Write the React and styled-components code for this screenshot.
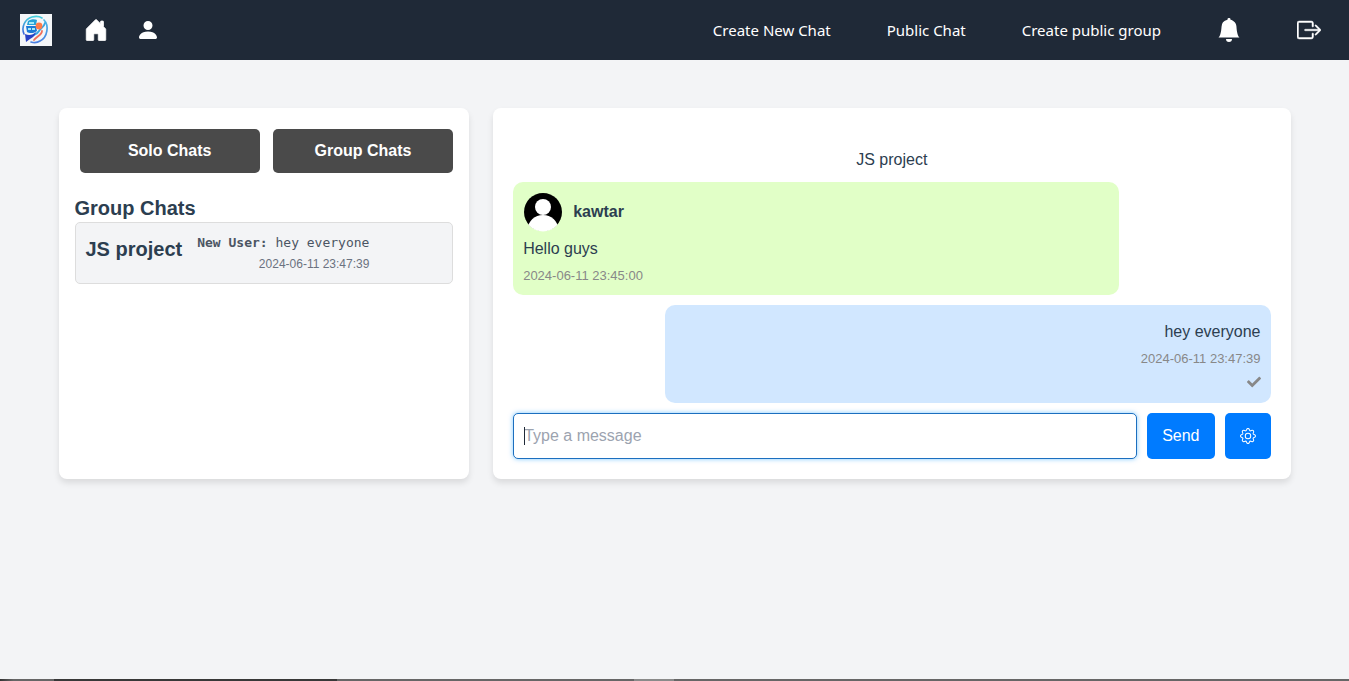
import React from "react";
import styled, { createGlobalStyle } from "styled-components";
import { BsHouseDoorFill, BsFillPersonFill, BsBellFill, BsBoxArrowRight, BsGear } from "react-icons/bs";
import { FaCheck } from "react-icons/fa";

const GlobalStyle = createGlobalStyle`
  *, *::before, *::after { box-sizing: border-box; }
  body {
    margin: 0;
    background: #f3f4f6;
    color: #2c3e50;
    font: 16px/24px "Liberation Sans", Arial, sans-serif;
  }
  h1, h2, h3, p, ul { margin: 0; padding: 0; }
  button, input { font: inherit; }
`;

const Page = styled.div`
  display: flex;
  flex-direction: column;
  min-height: 100vh;
`;

const NavBar = styled.header`
  display: flex;
  align-items: center;
  justify-content: space-between;
  height: 60px;
  padding: 0 28px 0 20px;
  background: #1f2937;
`;

const NavGroup = styled.nav`
  display: flex;
  align-items: center;
  gap: ${(p) => p.$gap}px;
`;

const NavLink = styled.a`
  display: flex;
  color: #fff;
  font: 15px/24px "Noto Sans", "Open Sans", sans-serif;
  text-decoration: none;
  white-space: nowrap;
`;

const IconButton = styled.button`
  display: flex;
  padding: 0;
  border: 0;
  background: none;
  color: #fff;
  cursor: pointer;
`;

const Main = styled.main`
  display: flex;
  gap: 24px;
  width: 100%;
  max-width: 1280px;
  margin: 0 auto;
  padding: 48px 24px;
`;

const Card = styled.section`
  background: #fff;
  border-radius: 8px;
  box-shadow: 0 4px 6px rgba(0, 0, 0, 0.1);
`;

const Sidebar = styled(Card)`
  flex: none;
  width: calc(100% / 3);
  padding: 16px;
`;

const Conversation = styled(Card)`
  flex: 1;
  min-width: 0;
  padding: 20px;
`;

const Tabs = styled.div`
  display: flex;
  gap: 13px;
  padding: 5px 0 5px 5px;
  margin-bottom: 16px;
`;

const TabButton = styled.button`
  flex: 1;
  height: 44px;
  border: 0;
  border-radius: 5px;
  background: #4a4a4a;
  color: #fff;
  font-weight: bold;
  cursor: pointer;
`;

const SectionTitle = styled.h2`
  font-size: 20px;
  line-height: 28px;
`;

const ChatList = styled.ul`
  list-style: none;
`;

const ChatItem = styled.li`
  display: flex;
  gap: 15px;
  padding: 10px;
  border: 1px solid #ddd;
  border-radius: 5px;
  background: #f3f4f6;
`;

const ChatName = styled.h3`
  font-size: 20px;
  line-height: 32px;
`;

const Preview = styled.div`
  display: flex;
  flex-direction: column;
  gap: 2px;
  text-align: right;
`;

const PreviewText = styled.p`
  color: #4b5563;
  font: 13px/20px "DejaVu Sans Mono", monospace;
`;

const PreviewTime = styled.time`
  color: #6b7280;
  font-size: 12px;
  line-height: 18px;
`;

const ChatTitle = styled.h1`
  padding: 20px 0 10px;
  font-size: 16px;
  font-weight: normal;
  text-align: center;
`;

const Messages = styled.div`
  display: flex;
  flex-direction: column;
  gap: 10px;
  margin-bottom: 10px;
`;

const Bubble = styled.article`
  display: flex;
  flex-direction: column;
  align-items: ${(p) => (p.$own ? "flex-end" : "flex-start")};
  align-self: ${(p) => (p.$own ? "flex-end" : "flex-start")};
  width: 80%;
  padding: 10px;
  border-radius: 10px;
  background: ${(p) => (p.$own ? "#d1e7ff" : "#e1ffc7")};
`;

const Sender = styled.div`
  display: flex;
  align-items: center;
  gap: 10px;
  height: 40px;
  font-weight: bold;
`;

const MessageText = styled.p`
  margin: 5px 0;
`;

const MessageTime = styled.time`
  color: #888;
  font-size: 13px;
  line-height: 19px;
`;

const Status = styled.span`
  display: flex;
  align-items: center;
  height: 25px;
  padding-top: 2px;
  color: #888;
`;

const Composer = styled.form`
  display: flex;
  gap: 10px;
  height: 46px;
`;

const InputWrap = styled.div`
  position: relative;
  display: flex;
  flex: 1;
  min-width: 0;
`;

const MessageInput = styled.input`
  flex: 1;
  min-width: 0;
  padding: 0 10px;
  border: 1px solid #ccc;
  border-radius: 5px;
  color: #2c3e50;
  caret-color: transparent;
  outline: none;
  &::placeholder { color: #9ca3af; }
  &:not(:placeholder-shown) { caret-color: #2c3e50; }
  &:focus {
    border-color: #1c6fbf;
    box-shadow: 0 0 5px rgba(0, 150, 255, 0.5);
  }
`;

const Caret = styled.span`
  position: absolute;
  top: 14px;
  left: 11px;
  width: 1px;
  height: 18px;
  background: #1f2937;
  pointer-events: none;
  visibility: hidden;
  ${MessageInput}:focus:placeholder-shown + & { visibility: visible; }
`;

const ActionButton = styled.button`
  display: flex;
  align-items: center;
  padding: 0 15px;
  border: 0;
  border-radius: 5px;
  background: #007bff;
  color: #fff;
  cursor: pointer;
`;

const BottomEdge = styled.footer`
  height: 2px;
  margin-top: auto;
  background: linear-gradient(
    90deg,
    #333 0, #666 1%, #666 4%, #383838 4%, #383838 25%,
    #666 25%, #666 47%, #8a8a8a 47%, #8a8a8a 50%, #666 50%
  );
`;

const Logo = () => (
  <svg width="32" height="32" viewBox="0 0 32 32" role="img" aria-label="Logo">
    <defs>
      <linearGradient id="ring" x1="0" y1="0" x2="0" y2="1">
        <stop offset="0" stopColor="#45d0dc" />
        <stop offset="1" stopColor="#3a62dc" />
      </linearGradient>
      <linearGradient id="arc" x1="0" y1="0" x2="0" y2="1">
        <stop offset="0" stopColor="#4ab8e8" />
        <stop offset="1" stopColor="#4a7fe0" />
      </linearGradient>
    </defs>
    <rect width="32" height="32" fill="#f4f6f8" />
    <g fill="none" strokeLinecap="round">
      <path d="M4 20C1 13 5 5 12 3c4-1 7-1 10 1" stroke="url(#ring)" strokeWidth="1.6" />
      <path d="M24 6c5 5 4 17-4 21-3 2-6 2-9 1" stroke="url(#arc)" strokeWidth="1.7" />
      <path d="M22 17c0 4-5 5-8 9" stroke="#f0705c" strokeWidth="1.8" />
      <path d="M25 9c-1 4-4 5-6 8-1 2-3 3-5 4" stroke="#35a5e2" strokeWidth="1.8" />
    </g>
    <path d="M8 7c3-2 7-2 9-1l-1 5H7z" fill="#27a3d8" />
    <path d="M6 12h10l1 5c-2 2-7 3-10 1z" fill="#1e7ad6" />
    <path d="M9 8h5v2H9zM8 14h3v2H8zM12 14h3v2h-3z" fill="#a5e9f6" />
    <path d="M5 20c4 2 8 1 11-2-1 4-4 6-6 7l-4 3z" fill="#2841c5" />
    <circle cx="19" cy="12" r="3.4" fill="#ff7b49" />
  </svg>
);

const Avatar = () => (
  <svg width="40" height="40" viewBox="0 0 40 40" role="img" aria-label="kawtar">
    <defs>
      <clipPath id="face"><circle cx="20" cy="20" r="19.4" /></clipPath>
    </defs>
    <circle cx="20" cy="20" r="19" fill="#000" />
    <g clipPath="url(#face)" fill="#fff">
      <circle cx="20" cy="15" r="8" />
      <ellipse cx="20" cy="37" rx="15" ry="14" />
    </g>
  </svg>
);

export default function App() {
  return (
    <Page>
      <GlobalStyle />
      <NavBar>
        <NavGroup $gap={32}>
          <NavLink href="#"><Logo /></NavLink>
          <NavGroup $gap={28}>
            <NavLink href="#home" aria-label="Home"><BsHouseDoorFill size={24} strokeWidth={0.5} /></NavLink>
            <NavLink href="#profile" aria-label="Profile"><BsFillPersonFill size={24} /></NavLink>
          </NavGroup>
        </NavGroup>
        <NavGroup $gap={56}>
          <NavLink href="#new">Create New Chat</NavLink>
          <NavLink href="#public">Public Chat</NavLink>
          <NavLink href="#group">Create public group</NavLink>
          <IconButton aria-label="Notifications"><BsBellFill size={24} /></IconButton>
          <IconButton aria-label="Log out"><BsBoxArrowRight size={24} strokeWidth={0.3} /></IconButton>
        </NavGroup>
      </NavBar>

      <Main>
        <Sidebar>
          <Tabs>
            <TabButton>Solo Chats</TabButton>
            <TabButton>Group Chats</TabButton>
          </Tabs>
          <SectionTitle>Group Chats</SectionTitle>
          <ChatList>
            <ChatItem>
              <ChatName>JS project</ChatName>
              <Preview>
                <PreviewText><strong>New User:</strong> hey everyone</PreviewText>
                <PreviewTime>2024-06-11 23:47:39</PreviewTime>
              </Preview>
            </ChatItem>
          </ChatList>
        </Sidebar>

        <Conversation>
          <ChatTitle>JS project</ChatTitle>
          <Messages>
            <Bubble>
              <Sender><Avatar />kawtar</Sender>
              <MessageText>Hello guys</MessageText>
              <MessageTime>2024-06-11 23:45:00</MessageTime>
            </Bubble>
            <Bubble $own>
              <MessageText>hey everyone</MessageText>
              <MessageTime>2024-06-11 23:47:39</MessageTime>
              <Status><FaCheck size={14} /></Status>
            </Bubble>
          </Messages>
          <Composer onSubmit={(e) => e.preventDefault()}>
            <InputWrap>
              <MessageInput autoFocus type="text" aria-label="Message" placeholder="Type a message" />
              <Caret />
            </InputWrap>
            <ActionButton type="submit">Send</ActionButton>
            <ActionButton type="button" aria-label="Settings"><BsGear size={16} /></ActionButton>
          </Composer>
        </Conversation>
      </Main>
      <BottomEdge />
    </Page>
  );
}
